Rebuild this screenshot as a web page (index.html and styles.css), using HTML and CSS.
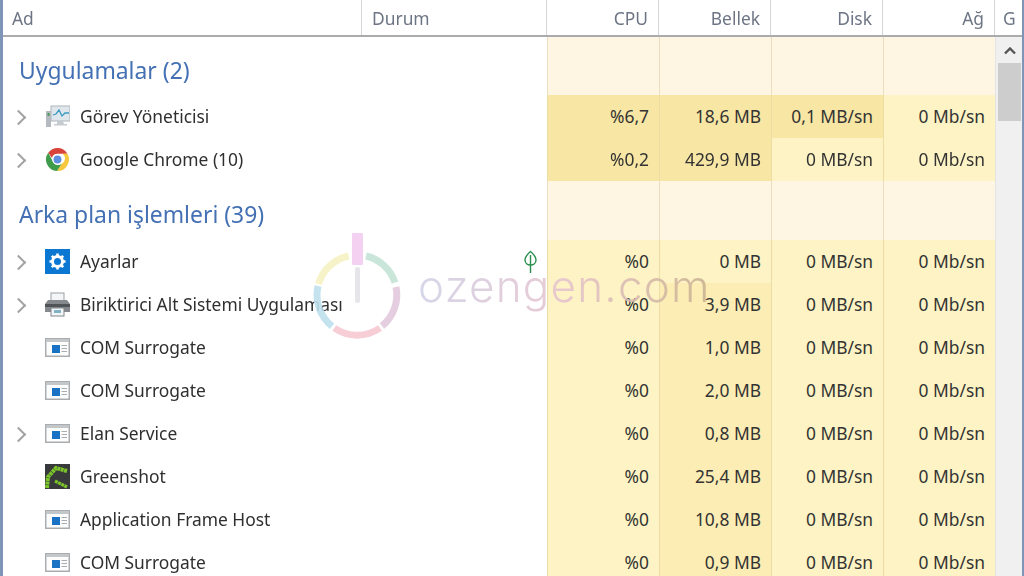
FILE: index.html
```html
<!DOCTYPE html>
<html lang="tr">
<head>
  <meta charset="UTF-8">
  <meta name="viewport" content="width=device-width, initial-scale=1">
  <title>Görev Yöneticisi</title>
  <link rel="stylesheet" href="styles.css">
</head>
<body>
  <svg class="icon-defs" width="0" height="0">
    <defs>
      <symbol id="ico-window" viewBox="0 0 25 19">
        <rect x="0.75" y="0.75" width="23.5" height="17.5" fill="#fdfdfd" stroke="#a9adb0" stroke-width="1.5"/>
        <rect x="1" y="1" width="23" height="3" fill="#c3c7ca"/>
        <rect x="7" y="7" width="8" height="8" fill="#1a72c4"/>
        <path d="M16.500 7.500h5.500M16.500 10.500h5.500M16.500 13.500h5.500" stroke="#a9adb0" stroke-width="1.2"/>
      </symbol>
    </defs>
  </svg>

  <div class="taskmgr">
    <div class="head-row">
      <div class="head-cell">Ad</div>
      <div class="head-cell">Durum</div>
      <div class="head-cell num">CPU</div>
      <div class="head-cell num">Bellek</div>
      <div class="head-cell num">Disk</div>
      <div class="head-cell num">Ağ</div>
      <div class="head-cell last">G</div>
    </div>

    <div class="body">
      <div class="rows">
        <div class="group">
          <div class="group-title">Uygulamalar (2)</div>
          <div class="spacer"></div>
          <div class="h0"></div><div class="h0"></div><div class="h0"></div><div class="h0"></div>
        </div>

        <div class="row">
          <div class="name"><span class="arrow"></span>
            <svg class="ico" viewBox="0 0 25 25">
              <rect x="6" y="2" width="19" height="15" fill="#dfe6ec" stroke="#aeb6bc"/>
              <path d="M8 11l3-1 3-4 3 6 3-3h4" fill="none" stroke="#3a9ac0" stroke-width="1.3"/>
              <path d="M12 17h6l1 3h3v1.500H9V20h3z" fill="#c6cbcf"/>
              <rect x="1" y="7" width="5" height="16" fill="#b4babf"/>
              <rect x="2.500" y="9" width="2" height="3" fill="#4f9a5a"/>
            </svg>Görev Yöneticisi</div>
          <div class="status"></div>
          <div class="cell h3">%6,7</div><div class="cell h3">18,6 MB</div><div class="cell h3">0,1 MB/sn</div><div class="cell h1">0 Mb/sn</div>
        </div>

        <div class="row">
          <div class="name"><span class="arrow"></span>
            <svg class="ico" viewBox="0 0 24 24">
              <path d="M12 1a11 11 0 0 1 9.530 5.500H12a5.500 5.500 0 0 0-5.300 4L3.100 5.500A11 11 0 0 1 12 1z" fill="#d8433a"/>
              <path d="M21.530 6.500A11 11 0 0 1 11.500 23l4.500-7a5.500 5.500 0 0 0 .8-9.500z" fill="#f6c83f"/>
              <path d="M11.500 23A11 11 0 0 1 3.100 5.500L7.500 14a5.500 5.500 0 0 0 8.500 2z" fill="#3f9c4b"/>
              <circle cx="12" cy="12" r="5" fill="#fff"/>
              <circle cx="12" cy="12" r="3.800" fill="#5d8fdf"/>
            </svg>Google Chrome (10)</div>
          <div class="status"></div>
          <div class="cell h3">%0,2</div><div class="cell h3">429,9 MB</div><div class="cell h1">0 MB/sn</div><div class="cell h1">0 Mb/sn</div>
        </div>

        <div class="group">
          <div class="group-title">Arka plan işlemleri (39)</div>
          <div class="spacer"></div>
          <div class="h0"></div><div class="h0"></div><div class="h0"></div><div class="h0"></div>
        </div>

        <div class="row">
          <div class="name"><span class="arrow"></span>
            <svg class="ico" viewBox="0 0 25 25">
              <rect width="25" height="25" fill="#0a78d2"/>
              <circle cx="12.500" cy="12.500" r="5" fill="none" stroke="#fff" stroke-width="3"/>
              <path d="M12.500 4.500v3M12.500 17.500v3M4.500 12.500h3M17.500 12.500h3M6.800 6.800l2.100 2.100M16.100 16.100l2.100 2.100M6.800 18.200l2.100-2.100M16.100 8.900l2.100-2.100" stroke="#fff" stroke-width="2.600"/>
            </svg>Ayarlar</div>
          <div class="status">
            <svg class="leaf" viewBox="0 0 14 24">
              <path d="M7 1.500C3.500 4.500 1.500 7 1.500 10c0 3 2.500 5 5.500 5s5.500-2 5.500-5c0-3-2-5.500-5.500-8.500z" fill="none" stroke="#2a8f4e" stroke-width="1.400"/>
              <path d="M7 5v18" stroke="#2a8f4e" stroke-width="1.400"/>
            </svg>
          </div>
          <div class="cell h1">%0</div><div class="cell h1">0 MB</div><div class="cell h1">0 MB/sn</div><div class="cell h1">0 Mb/sn</div>
        </div>

        <div class="row">
          <div class="name"><span class="arrow"></span>
            <svg class="ico" viewBox="0 0 25 25">
              <rect x="6" y="1" width="13" height="8" fill="#f4f5f6" stroke="#9aa0a5"/>
              <path d="M3 8h19l3 4v8H0v-8z" fill="#85898d"/>
              <rect x="0" y="12" width="25" height="3" fill="#505457"/>
              <rect x="6" y="16" width="13" height="8" fill="#f4f5f6" stroke="#7f868b"/>
              <rect x="9" y="18" width="7" height="3" fill="#7fb2c4"/>
            </svg>Biriktirici Alt Sistemi Uygulaması</div>
          <div class="status"></div>
          <div class="cell h1">%0</div><div class="cell h2">3,9 MB</div><div class="cell h1">0 MB/sn</div><div class="cell h1">0 Mb/sn</div>
        </div>

        <div class="row">
          <div class="name"><span class="no-arrow"></span><svg class="ico win"><use href="#ico-window"/></svg>COM Surrogate</div>
          <div class="status"></div>
          <div class="cell h1">%0</div><div class="cell h2">1,0 MB</div><div class="cell h1">0 MB/sn</div><div class="cell h1">0 Mb/sn</div>
        </div>

        <div class="row">
          <div class="name"><span class="no-arrow"></span><svg class="ico win"><use href="#ico-window"/></svg>COM Surrogate</div>
          <div class="status"></div>
          <div class="cell h1">%0</div><div class="cell h2">2,0 MB</div><div class="cell h1">0 MB/sn</div><div class="cell h1">0 Mb/sn</div>
        </div>

        <div class="row">
          <div class="name"><span class="arrow"></span><svg class="ico win"><use href="#ico-window"/></svg>Elan Service</div>
          <div class="status"></div>
          <div class="cell h1">%0</div><div class="cell h2">0,8 MB</div><div class="cell h1">0 MB/sn</div><div class="cell h1">0 Mb/sn</div>
        </div>

        <div class="row">
          <div class="name"><span class="no-arrow"></span>
            <svg class="ico" viewBox="0 0 25 25">
              <rect width="25" height="25" fill="#37393a"/>
              <path d="M2 24l1-11 8-9 11 3" fill="none" stroke="#7cc52a" stroke-width="4" stroke-dasharray="3 .5"/>
              <path d="M10 17l12 6" fill="none" stroke="#7cc52a" stroke-width="3.200" stroke-dasharray="3 .5"/>
            </svg>Greenshot</div>
          <div class="status"></div>
          <div class="cell h1">%0</div><div class="cell h2">25,4 MB</div><div class="cell h1">0 MB/sn</div><div class="cell h1">0 Mb/sn</div>
        </div>

        <div class="row">
          <div class="name"><span class="no-arrow"></span><svg class="ico win"><use href="#ico-window"/></svg>Application Frame Host</div>
          <div class="status"></div>
          <div class="cell h1">%0</div><div class="cell h2">10,8 MB</div><div class="cell h1">0 MB/sn</div><div class="cell h1">0 Mb/sn</div>
        </div>

        <div class="row">
          <div class="name"><span class="no-arrow"></span><svg class="ico win"><use href="#ico-window"/></svg>COM Surrogate</div>
          <div class="status"></div>
          <div class="cell h1">%0</div><div class="cell h2">0,9 MB</div><div class="cell h1">0 MB/sn</div><div class="cell h1">0 Mb/sn</div>
        </div>
      </div>

      <div class="scrollbar">
        <svg class="scroll-up" viewBox="0 0 12 8"><path d="M1 6.500l5-5 5 5" fill="none" stroke="#555" stroke-width="2.400"/></svg>
        <div class="thumb"></div>
      </div>
    </div>
  </div>

  <!-- Filigran -->
  <div class="watermark">
    <svg class="wm-logo" viewBox="0 0 92 108">
      <g fill="none" stroke-width="7">
        <path d="M6.500 52A40 40 0 0 1 36.600 24" stroke="#f6f2c4"/>
        <path d="M54 24A40 40 0 0 1 83 50.600" stroke="#c5e3d6"/>
        <path d="M84 55A40 40 0 0 1 70 94" stroke="#e3c9dc"/>
        <path d="M68 96A40 40 0 0 1 22.300 96" stroke="#f7c9d2"/>
        <path d="M20 94.200A40 40 0 0 1 6 54" stroke="#bfe0ee"/>
      </g>
      <rect x="40" y="1" width="11" height="32" rx="1" fill="#f3cdf0"/>
      <rect x="43" y="35" width="5" height="36" rx="2" fill="#e4e4e8"/>
    </svg>
    <span class="wm-text">ozengen.com</span>
  </div>
</body>
</html>
```

FILE: styles.css
```css
* { box-sizing: border-box; }
html, body { height: 100%; }
body {
  margin: 0;
  overflow: hidden;
  background: #fff;
  font-family: "Noto Sans", "Open Sans", sans-serif;
  font-size: 17.4px;
  color: #3a3a3a;
}
.icon-defs { position: absolute; }

.taskmgr {
  height: 576px;
  border-left: 3px solid #7f95b8;
  border-right: 2px solid #7f95b8;
  overflow: hidden;
  filter: blur(0.35px);
}

/* Kopfzeile */
.head-row {
  display: grid;
  grid-template-columns: 359px 185px 112px 112px 112px 112px 1fr;
  height: 37px;
  border-bottom: 2px solid #a9abad;
}
.head-cell {
  display: flex;
  align-items: center;
  padding: 0 10px;
  color: #6d7585;
  border-right: 1px solid #d3d5d8;
}
.head-cell:first-child { padding-left: 9px; }
.head-cell.num { justify-content: flex-end; }
.head-cell.last { border-right: none; padding-left: 8px; }

/* Tabelle */
.body { display: flex; }
.rows { width: 992px; }
.group, .row {
  display: grid;
  grid-template-columns: 359px 185px 112px 112px 112px 112px;
}
.group { height: 58px; }
.group:nth-child(4) { height: 59px; }
.row { height: 43px; }
.group-title {
  padding: 19px 0 0 16px;
  font-size: 22.9px;
  line-height: 30px;
  color: #4470b4;
  white-space: nowrap;
}
.name {
  display: flex;
  align-items: center;
  padding-bottom: 2px;
  white-space: nowrap;
  overflow: hidden;
  color: #2f2f2f;
}
.arrow, .no-arrow {
  flex: none;
  width: 42px;
}
.arrow {
  position: relative;
  height: 14px;
  margin-top: 2px;
}
.arrow::before {
  content: "";
  position: absolute;
  left: 10px;
  top: 2px;
  width: 9px;
  height: 9px;
  border-top: 2px solid #a3a3a3;
  border-right: 2px solid #a3a3a3;
  transform: rotate(45deg);
}
.ico {
  flex: none;
  width: 25px;
  height: 25px;
  margin: 2px 10px 0 0;
}
.ico.win { height: 19px; }
.status {
  display: flex;
  align-items: center;
  justify-content: flex-end;
  padding-right: 9px;
}
.leaf { width: 15px; height: 24px; }

.cell {
  display: flex;
  align-items: center;
  justify-content: flex-end;
  padding: 0 10px 2px 0;
  border-left: 1px solid #ecdca6;
  color: #333;
}
.h0, .group .h0 { background: #fef6e2; border-left: 1px solid #ecdfc0; }
.h1 { background: #fdf3c4; }
.h2 { background: #fbedb3; }
.h3 { background: #f8e6a4; }

/* Scrollleiste */
.scrollbar {
  flex: none;
  width: 27px;
  height: 539px;
  padding-left: 2px;
  background: #f0f0f0;
  border-left: 1px solid #e4e4e4;
}
.scroll-up {
  display: block;
  width: 12px;
  height: 8px;
  margin: 10px auto 8px;
}
.thumb {
  width: 23px;
  height: 58px;
  background: #cdcdcd;
}

/* Filigran */
.watermark {
  position: absolute;
  left: 312px;
  top: 232px;
  display: flex;
  align-items: center;
  gap: 14px;
  opacity: 0.9;
  pointer-events: none;
}
.wm-logo { width: 92px; height: 108px; }
.wm-text {
  font-family: Inter, sans-serif;
  font-weight: 300;
  font-size: 44px;
  letter-spacing: 1.2px;
  background: linear-gradient(90deg, #d2d2e8, #e6c4ce 50%, #c9b291);
  -webkit-background-clip: text;
  background-clip: text;
  color: transparent;
}
```
